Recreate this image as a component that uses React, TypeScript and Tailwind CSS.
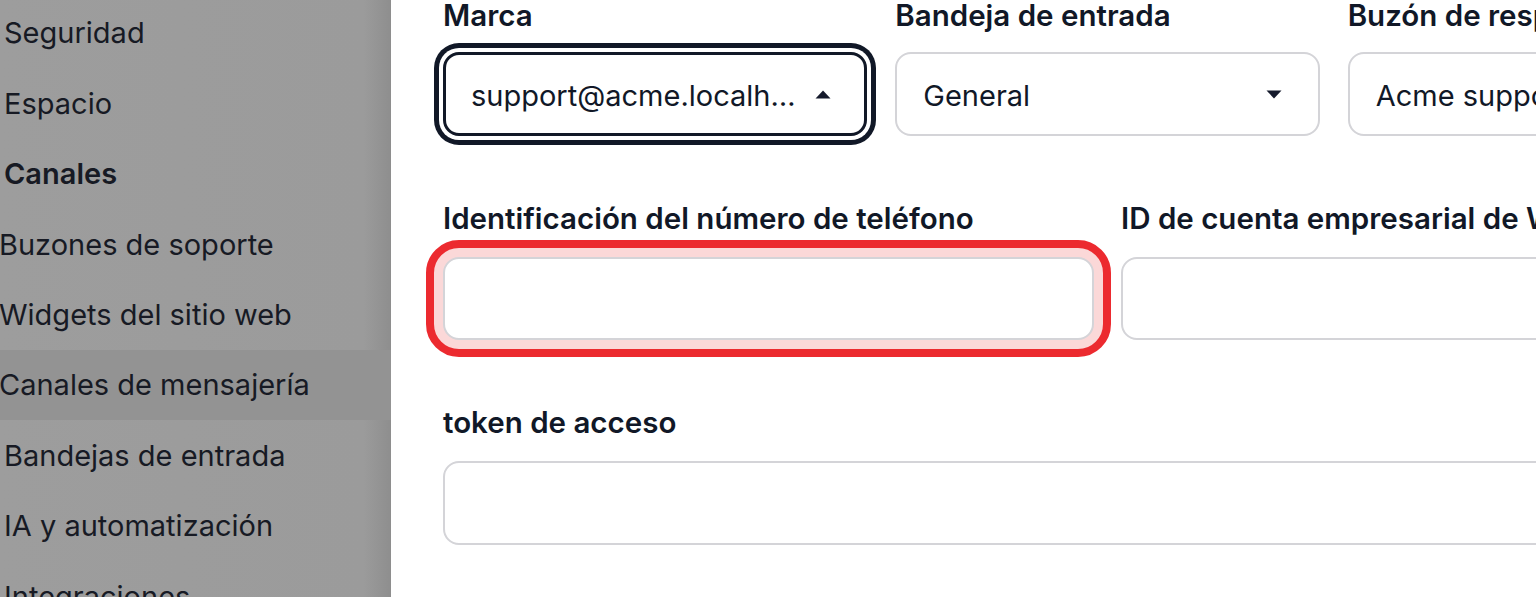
import React from "react";

function Caret({ up = false }: { up?: boolean }) {
  return (
    <svg width="16" height="9" viewBox="0 0 16 9" className="shrink-0">
      {up ? (
        <path d="M8 0.5 L15.5 8.5 L0.5 8.5 Z" fill="#151a2c" />
      ) : (
        <path d="M0.5 0.5 L15.5 0.5 L8 8.5 Z" fill="#151a2c" />
      )}
    </svg>
  );
}

function Label({ children }: { children: React.ReactNode }) {
  return (
    <div className="h-[30px] leading-[30px] text-[29.5px] font-semibold text-[#111827] whitespace-nowrap">
      {children}
    </div>
  );
}

const sideItems: { label: string; bold?: boolean; sub?: boolean; active?: boolean }[] = [
  { label: "Seguridad" },
  { label: "Espacio" },
  { label: "Canales", bold: true },
  { label: "Buzones de soporte", sub: true },
  { label: "Widgets del sitio web", sub: true },
  { label: "Canales de mensajería", sub: true, active: true },
  { label: "Bandejas de entrada" },
  { label: "IA y automatización" },
  { label: "Integraciones" },
];

export default function App() {
  return (
    <div className="flex h-[597px] w-[1536px] overflow-hidden bg-white font-['Inter',sans-serif] text-[#111827]">
      <aside className="w-[391px] shrink-0 overflow-hidden bg-[linear-gradient(to_right,#9d9d9d_0%,#9b9b9b_93%,#8e8e8e_100%)]">
        <div className="-mt-[2px] flex flex-col">
          {sideItems.map((it) => (
            <div
              key={it.label}
              className={
                "flex h-[70.4px] items-center whitespace-nowrap text-[29px] text-[#171a24] " +
                (it.sub ? "pl-0 -ml-[1px] " : "pl-[4px] ") +
                (it.bold ? "font-semibold " : "font-normal ") +
                (it.active ? "bg-[#939393]" : "")
              }
            >
              {it.label}
            </div>
          ))}
        </div>
      </aside>

      <main className="min-w-0 flex-1 pl-[52px]">
        <div className="flex w-[1329px] flex-col gap-[67px]">
          {/* Row 1 */}
          <div className="grid grid-cols-3 gap-x-[28px]">
            <div className="flex flex-col gap-[22px]">
              <Label>Marca</Label>
              <div className="flex h-[84px] items-center justify-between rounded-[16px] border-[3px] border-[#111827] bg-white pl-[25px] pr-[33px] text-[29px] text-[#111827] shadow-[0_0_0_4px_#ffffff,0_0_0_9px_#111827]">
                <span className="whitespace-nowrap pt-[4px]">support@acme.localh…</span>
                <Caret up />
              </div>
            </div>
            <div className="flex flex-col gap-[22px]">
              <Label>Bandeja de entrada</Label>
              <div className="flex h-[84px] items-center justify-between rounded-[16px] border-2 border-[#d4d4d8] bg-white pl-[26px] pr-[36px] text-[29px] text-[#111827]">
                <span className="whitespace-nowrap pt-[4px]">General</span>
                <Caret />
              </div>
            </div>
            <div className="flex flex-col gap-[22px]">
              <Label>Buzón de respuesta</Label>
              <div className="flex h-[84px] items-center justify-between rounded-[16px] border-2 border-[#d4d4d8] bg-white pl-[26px] pr-[36px] text-[29px] text-[#111827]">
                <span className="whitespace-nowrap pt-[4px]">Acme support</span>
                <Caret />
              </div>
            </div>
          </div>

          {/* Row 2 */}
          <div className="grid grid-cols-2 gap-x-[27px]">
            <div className="flex flex-col gap-[24px]">
              <Label>Identificación del número de teléfono</Label>
              <div className="-m-[17px] rounded-[33px] border-[8px] border-[#ec2a2f] bg-[#fbd8d8] p-[9px]">
                <div className="h-[83px] rounded-[16px] border-2 border-[#d4d4d8] bg-white" />
              </div>
            </div>
            <div className="flex flex-col gap-[24px]">
              <Label>ID de cuenta empresarial de WhatsApp</Label>
              <div className="h-[83px] rounded-[16px] border-2 border-[#d4d4d8] bg-white" />
            </div>
          </div>

          {/* Row 3 */}
          <div className="flex flex-col gap-[24px]">
            <Label>token de acceso</Label>
            <div className="h-[84px] rounded-[16px] border-2 border-[#d4d4d8] bg-white" />
          </div>
        </div>
      </main>
    </div>
  );
}
